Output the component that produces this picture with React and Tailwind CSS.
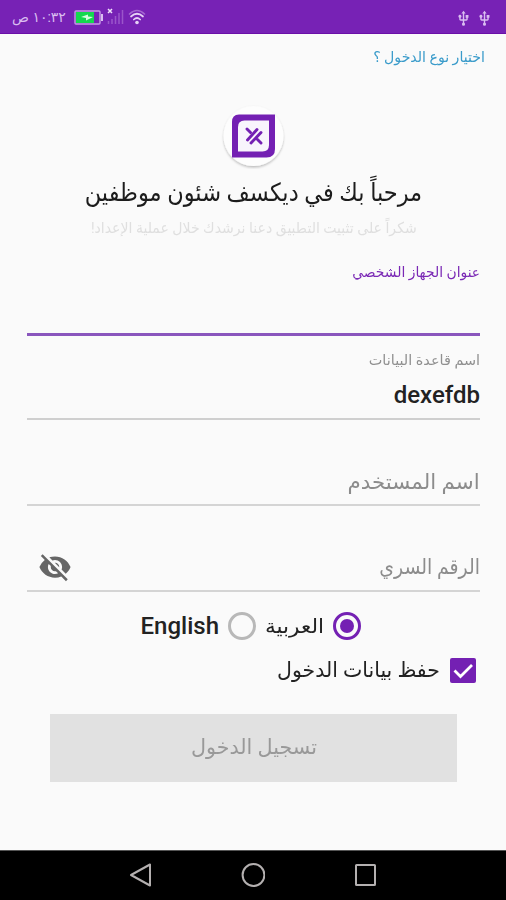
import { useState } from 'react';
import { MdVisibilityOff, MdUsb } from 'react-icons/md';

const StatusBar = () => (
  <header dir="ltr" className="flex h-[34px] items-center justify-between border-b border-[#6a0fa8] bg-[#7722b5] pl-3 pr-[13px] text-[#d9bdf0]">
    <div className="flex items-center">
      <span dir="rtl" className="w-[56px] whitespace-nowrap text-left text-[14px] leading-none">١٠:٣٢ ص</span>
      <svg className="ml-1.5 mt-0.5 h-[15px] w-[30px]" viewBox="0 0 30 15" fill="none">
        <rect x="1" y="1" width="25" height="13" rx="1" stroke="#c79ae6" strokeWidth="1.4" />
        <rect x="2" y="2" width="18" height="11" fill="#14d94f" />
        <path d="M7 7l7-2.500v2l5 .5-7 3.500v-2.500z" fill="#d5ffe0" />
        <rect x="27" y="4" width="2" height="7" fill="#d9bdf0" />
      </svg>
      <svg className="ml-[3px] h-[17px] w-[17px]" viewBox="0 0 17 17" fill="none">
        <path d="M1 1l4 4M5 1L1 5" stroke="#f0e2fa" strokeWidth="1.500" />
        <path d="M1.500 13v3M5 11v5M8.500 8v8M12 5v11M15.500 2v14" stroke="#9a55ca" strokeWidth="1.500" />
      </svg>
      <svg className="ml-1 h-[16px] w-[18px]" viewBox="0 0 18 16" fill="none" strokeLinecap="round">
        <path d="M1.500 5Q9-2 16.500 5" stroke="#a468d0" strokeWidth="1.600" />
        <path d="M3 7.500Q9 2 15 7.500M5.800 10.500Q9 7.500 12.200 10.500" stroke="#e6d2f5" strokeWidth="1.700" />
        <circle cx="9" cy="13.500" r="1.800" fill="#e6d2f5" />
      </svg>
    </div>
    <div className="flex gap-1 pt-[3px]">
      <MdUsb size={17} />
      <MdUsb size={17} />
    </div>
  </header>
);

const Logo = () => (
  <svg className="h-[64px] w-[68px]" viewBox="0 0 68 64" fill="none">
    <defs>
      <filter id="logoShadow" x="-20%" y="-20%" width="140%" height="140%">
        <feDropShadow dx="0" dy="1.500" stdDeviation="1" floodColor="#000" floodOpacity="0.25" />
      </filter>
    </defs>
    <circle cx="34.500" cy="31" r="30" fill="#fdfdfd" filter="url(#logoShadow)" />
    <path d="M20 9.500H56V44Q56 52.500 47.500 52.500H13V17Q13 9.500 20 9.500Z" fill="#7420b3" />
    <path d="M25.500 15.500H50V40Q50 46.500 43.500 46.500H19V22Q19 15.500 25.500 15.500Z" fill="#f8f4fc" />
    <g stroke="#7420b3" strokeWidth="2.900" strokeLinecap="round">
      <path d="M28.500 35L38 24.500M32 38L42 27.500" />
      <path d="M28 24l3.500 3.500M38.500 34.500l3.500 3.500" />
    </g>
  </svg>
);

const Radio = ({ checked, onClick }) => (
  <button
    type="button"
    role="radio"
    aria-checked={checked}
    onClick={onClick}
    className={`flex h-7 w-7 items-center justify-center rounded-full border-3 ${checked ? 'border-[#7420b3]' : 'border-[#b8b8b8]'}`}
  >
    {checked && <span className="h-3.5 w-3.5 rounded-full bg-[#7420b3]" />}
  </button>
);

const NavigationBar = () => (
  <nav dir="ltr" className="flex h-[50px] items-center justify-center gap-[88px] border-t border-[#555] bg-black pb-px">
    <svg className="h-6 w-6" viewBox="0 0 24 24" fill="none" stroke="#b4b0b0" strokeWidth="2" strokeLinejoin="round">
      <path d="M21 1.500v21L2 12z" />
    </svg>
    <svg className="h-6 w-6" viewBox="0 0 24 24" fill="none" stroke="#b4b0b0" strokeWidth="2">
      <circle cx="12.500" cy="12" r="10.900" />
    </svg>
    <svg className="h-6 w-6" viewBox="0 0 24 24" fill="none" stroke="#b4b0b0" strokeWidth="2">
      <rect x="3" y="2" width="19" height="20" rx="0.500" />
    </svg>
  </nav>
);

const App = () => {
  const [language, setLanguage] = useState('ar');
  const [remember, setRemember] = useState(true);

  return (
    <div dir="rtl" className="flex h-[900px] w-[506px] flex-col overflow-hidden bg-[#fafafa] font-['Roboto','DejaVu_Sans',sans-serif] whitespace-nowrap">
      <StatusBar />

      <main className="flex flex-1 flex-col px-[26px]">
        <a href="#" className="-mr-[5px] mt-[11px] h-6 self-start text-[15px] leading-6 text-[#3a9bca]">
          <span className="inline-block origin-right scale-x-[0.94]">اختيار نوع الدخول ؟</span>
        </a>

        <div className="mt-[36px] flex flex-col items-center">
          <Logo />
          <h1 className="mt-[6px] h-9 text-[25px] leading-9 text-[#1c1c1c]">
            <span className="inline-block scale-x-[0.9]">مرحباً بك في ديكسف شئون موظفين</span>
          </h1>
          <p className="mt-[5px] h-6 pl-0.5 text-[15px] leading-6 text-[#dfdfdf]">
            <span className="inline-block scale-x-[0.937]">شكراً على تثبيت التطبيق دعنا نرشدك خلال عملية الإعداد!</span>
          </p>
        </div>

        <div className="ml-px mt-[20px] h-[76px] border-b-[3px] border-[#8a56bd]">
          <label className="block h-6 text-[14px] leading-6 font-medium text-[#7a28b5]">
            <span className="inline-block origin-right scale-x-[0.99]">عنوان الجهاز الشخصي</span>
          </label>
        </div>

        <div className="ml-px mt-3 h-[72px] border-b-2 border-[#cfcfcf]">
          <label className="block h-6 text-[14px] leading-6 text-[#909090]">
            <span className="inline-block origin-right scale-x-[1.03]">اسم قاعدة البيانات</span>
          </label>
          <div dir="ltr" className="mt-[7px] text-right text-[24px] leading-8 font-medium text-[#222]">dexefdb</div>
        </div>

        <div className="ml-px flex h-[86px] items-end border-b-2 border-[#d4d4d4] pb-1">
          <span className="inline-block origin-right scale-x-[1.02] text-[21px] leading-9 text-[#8c8c8c]">اسم المستخدم</span>
        </div>

        <div className="ml-px flex h-[86px] items-end justify-between border-b-2 border-[#d4d4d4] pb-[5px]">
          <span className="inline-block origin-right scale-x-[0.9] text-[21px] leading-9 text-[#8c8c8c]">الرقم السري</span>
          <MdVisibilityOff className="mb-px ml-[11px] text-[#666]" size={34} />
        </div>

        <div className="mr-[119px] mt-5 flex h-7 items-center">
          <Radio checked={language === 'ar'} onClick={() => setLanguage('ar')} />
          <span className="mr-[9px] w-[59px] origin-right scale-x-[1.08] text-[20px] leading-7 text-[#222]">العربية</span>
          <span className="mr-[9px] flex">
            <Radio checked={language === 'en'} onClick={() => setLanguage('en')} />
          </span>
          <span className="mr-[9px] text-[24px] leading-7 font-medium text-[#222]">English</span>
        </div>

        <div className="mr-1 mt-[17px] flex h-[26px] items-center">
          <button
            type="button"
            role="checkbox"
            aria-checked={remember}
            onClick={() => setRemember(!remember)}
            className="flex h-[25px] w-[26px] items-center justify-center rounded-[2px] bg-[#7420b3] text-white"
          >
            {remember && (
              <svg className="h-[25px] w-[26px]" viewBox="0 0 26 25" fill="none" stroke="currentColor" strokeWidth="2.800">
                <path d="M4.500 12.500l6 6L22 7" />
              </svg>
            )}
          </button>
          <span className="mr-[10px] origin-right scale-x-[0.976] text-[21px] leading-7 text-[#222]">حفظ بيانات الدخول</span>
        </div>

        <button type="button" className="ml-[24px] mr-[23px] mt-[31px] flex h-[68px] items-center justify-center bg-[#e1e1e1] text-[21px] text-[#999]">
          <span className="inline-block scale-x-[0.985]">تسجيل الدخول</span>
        </button>
      </main>

      <NavigationBar />
    </div>
  );
};

export default App;
